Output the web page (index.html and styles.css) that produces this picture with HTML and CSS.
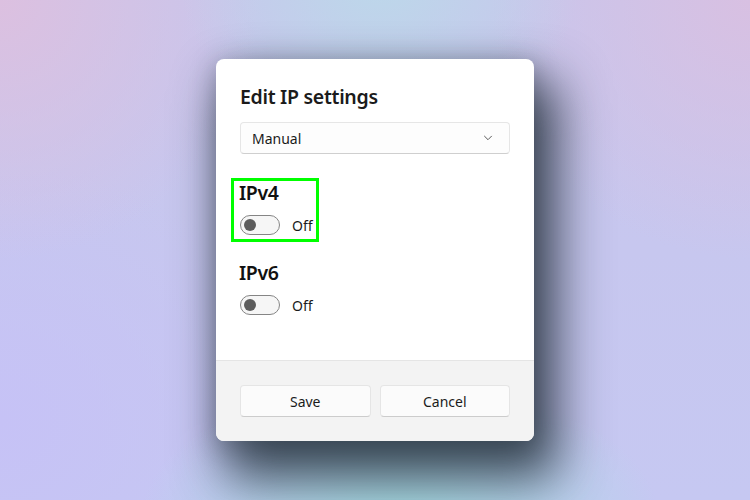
FILE: index.html
```html
<!DOCTYPE html>
<html lang="en">
<head>
<meta charset="utf-8">
<title>Edit IP settings</title>
<link rel="stylesheet" href="styles.css">
</head>
<body>
<div class="stage">
  <div class="dialog">
    <div class="content">
      <h1 class="title">Edit IP settings</h1>
      <div class="select">
        <span>Manual</span>
        <svg class="chev" width="10" height="6" viewBox="0 0 10 6"><path d="M1.5 1.2l3.5 3.5 3.5-3.5" fill="none" stroke="#5a5a5a" stroke-width="1" stroke-linecap="round" stroke-linejoin="round"/></svg>
      </div>
      <section class="group first">
        <h2 class="heading">IPv4</h2>
        <div class="toggle-row">
          <span class="toggle"><span class="knob"></span></span>
          <span class="state">Off</span>
        </div>
      </section>
      <section class="group">
        <h2 class="heading">IPv6</h2>
        <div class="toggle-row">
          <span class="toggle"><span class="knob"></span></span>
          <span class="state">Off</span>
        </div>
      </section>
    </div>
    <div class="footer">
      <button class="btn">Save</button>
      <button class="btn">Cancel</button>
    </div>
    <div class="highlight"></div>
  </div>
</div>
</body>
</html>
```
FILE: styles.css
```css
* { box-sizing: border-box; }
html, body { margin: 0; padding: 0; }
body {
  width: 750px;
  height: 500px;
  overflow: hidden;
  font-family: "Noto Sans", "Open Sans", sans-serif;
  color: #1b1b1b;
  background:
    radial-gradient(ellipse 260px 140px at 400px 520px, #a6dfe4 0%, rgba(166,223,228,0) 100%),
    radial-gradient(ellipse 200px 160px at 380px -20px, #bcd8ea 0%, rgba(188,216,234,0) 100%),
    radial-gradient(ellipse 260px 260px at 0px 0px, #dcc0e0 0%, rgba(220,192,224,0) 100%),
    radial-gradient(ellipse 260px 260px at 750px 0px, #d8c0e2 0%, rgba(216,192,226,0) 100%),
    radial-gradient(ellipse 300px 260px at 0px 420px, #c6c2f6 0%, rgba(198,194,246,0) 100%),
    linear-gradient(#c8c6ec, #c6c8f2);
}
.stage {
  width: 750px;
  height: 500px;
  display: flex;
  align-items: center;
  justify-content: center;
}
.dialog {
  position: relative;
  width: 318px;
  height: 382px;
  background: #ffffff;
  border-radius: 8px;
  display: flex;
  flex-direction: column;
  box-shadow:
    16px 30px 50px 8px rgba(30, 42, 52, 0.8),
    0 4px 24px 2px rgba(30, 42, 52, 0.25);
}
.content {
  flex: 1;
  padding: 24px 24px 0 24px;
}
.title {
  margin: 0;
  font-size: 19.5px;
  line-height: 28px;
  font-weight: 600;
  letter-spacing: -0.3px;
  color: #1b1b1b;
}
.select {
  margin-top: 11px;
  height: 32px;
  border: 1px solid #e6e6e6;
  border-bottom-color: #cfcfcf;
  border-radius: 4px;
  background: #fdfdfd;
  display: flex;
  align-items: center;
  justify-content: space-between;
  padding: 0 16px 0 11px;
  font-size: 14px;
  color: #1b1b1b;
}
.chev { display: block; }
.group { margin-top: 24px; }
.group.first { margin-top: 25px; }
.heading {
  margin: 0 0 0 -1px;
  font-size: 19.5px;
  line-height: 28px;
  font-weight: 600;
  letter-spacing: -0.4px;
  color: #111;
}
.toggle-row {
  margin-top: 8px;
  display: flex;
  align-items: center;
  gap: 12px;
  height: 20px;
}
.toggle {
  width: 40px;
  height: 20px;
  border: 1px solid #858585;
  border-radius: 10px;
  background: #f6f6f6;
  display: flex;
  align-items: center;
  padding-left: 3px;
}
.knob {
  width: 12px;
  height: 12px;
  border-radius: 50%;
  background: #5d5d5d;
}
.state {
  font-size: 14px;
  color: #1b1b1b;
}
.footer {
  height: 81px;
  background: #f3f3f3;
  border-top: 1px solid #e5e5e5;
  border-radius: 0 0 8px 8px;
  padding: 24px 24px 0 24px;
  display: flex;
  gap: 9px;
}
.btn {
  flex: 1;
  height: 32px;
  border: 1px solid #e5e5e5;
  border-bottom-color: #cccccc;
  border-radius: 4px;
  background: #fbfbfb;
  font-family: inherit;
  font-size: 14px;
  color: #1b1b1b;
}
.highlight {
  position: absolute;
  left: 15px;
  top: 119px;
  width: 88px;
  height: 64px;
  border: 3px solid #00ff00;
}
```
